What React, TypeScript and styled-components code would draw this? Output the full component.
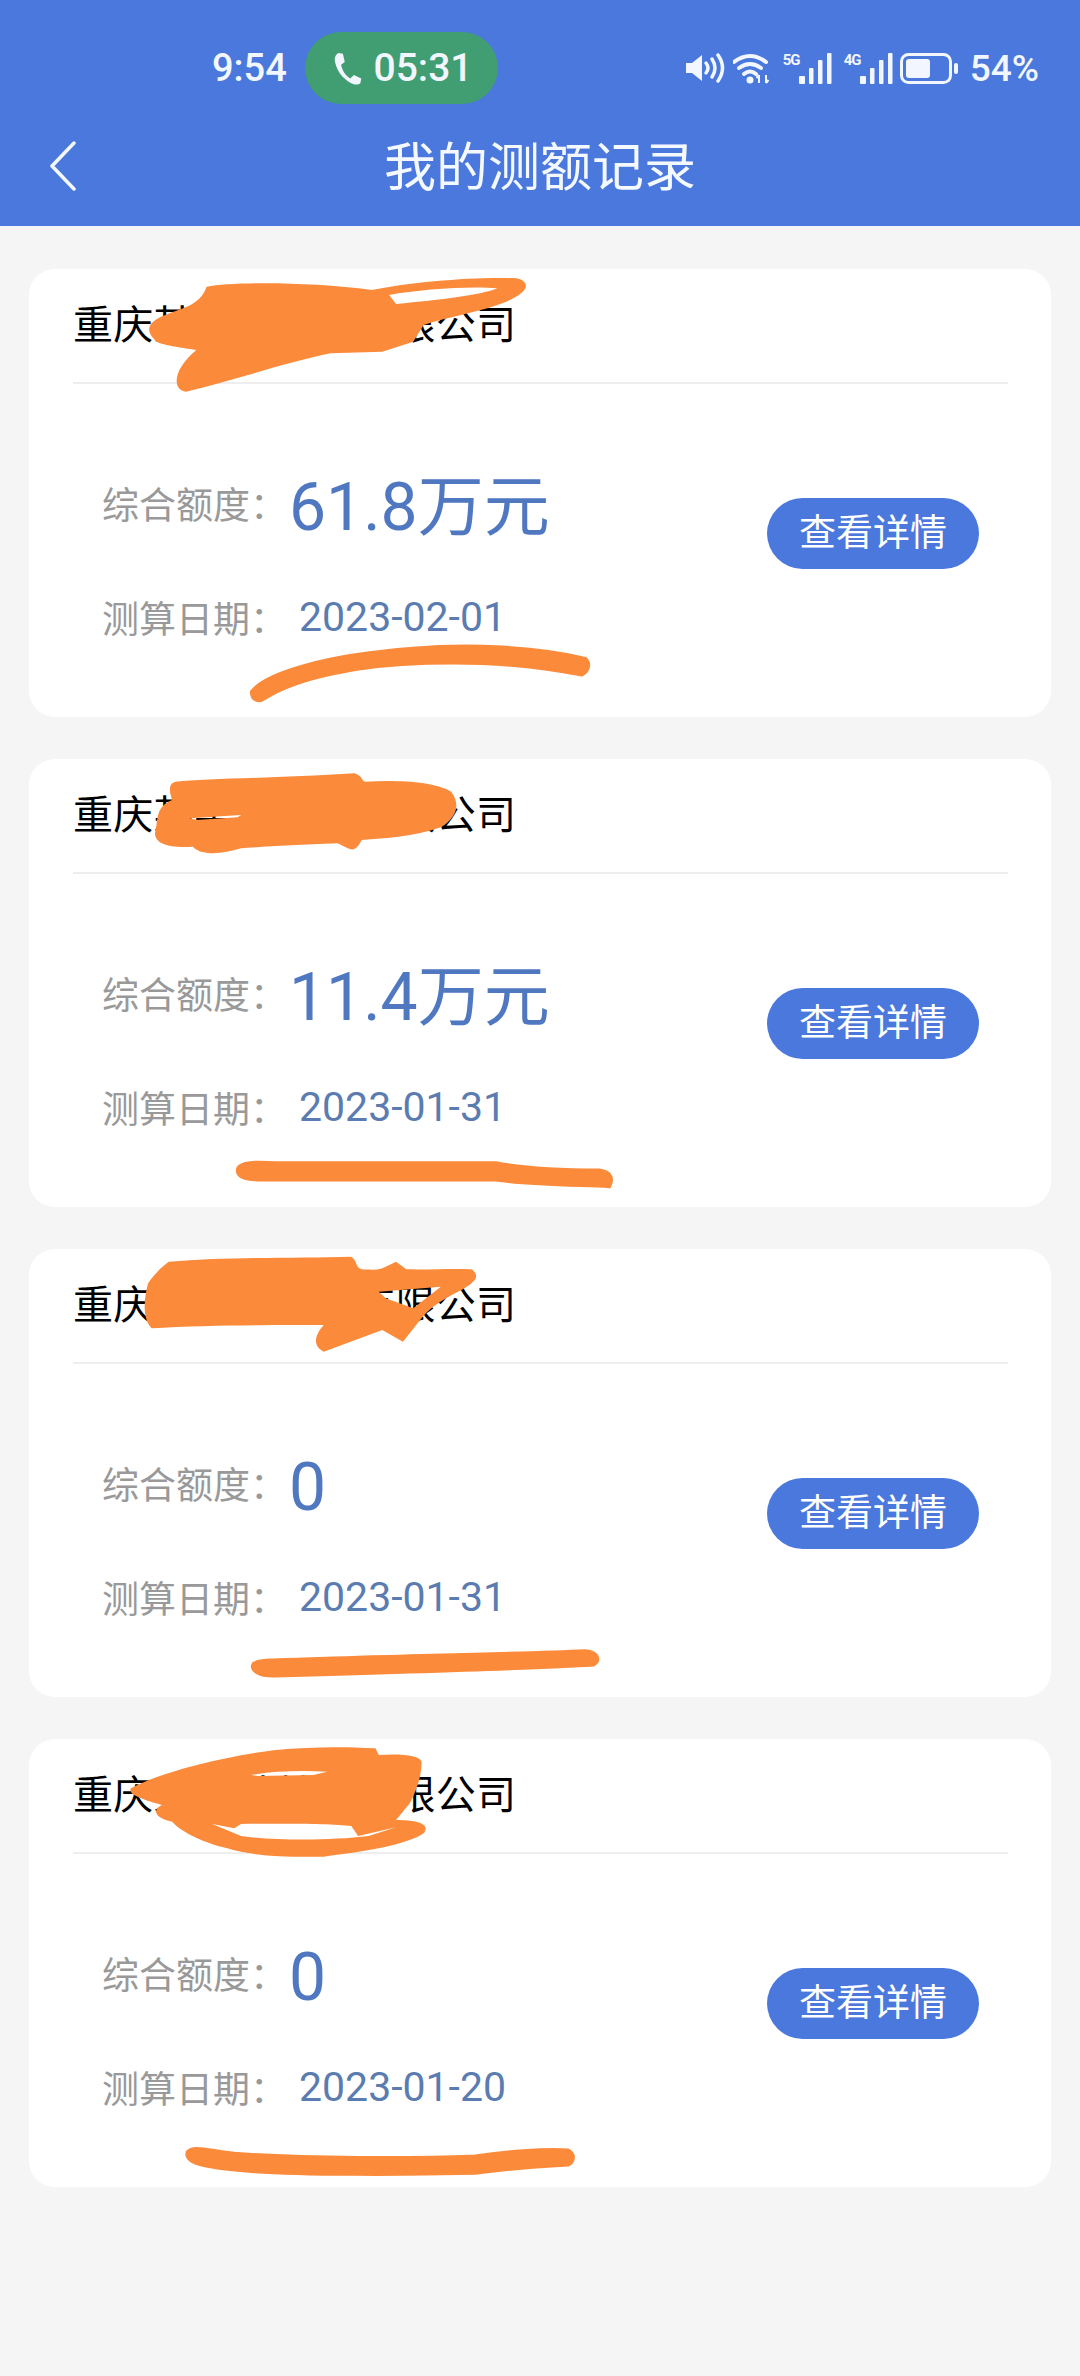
import React from "react";
import styled, { createGlobalStyle } from "styled-components";

const FONT = `Roboto, "Noto Sans CJK SC", sans-serif`;
const BLUE = "#4a78dc";
const SCRIBBLE = "#fb8a3a";

const records = [
  {
    amount: "61.8万元",
    date: "2023-02-01",
    scribble:
      "M300 110 C340 95 450 95 540 120 C600 95 690 80 750 85 C770 95 770 125 735 155 C700 185 650 200 615 225 L600 275 L555 305 L480 310 C420 335 340 390 270 425 C250 420 250 360 285 300 C250 290 225 280 225 270 C210 240 215 215 240 195 C260 175 290 170 300 110 Z M565 135 C610 118 680 108 722 115 C700 135 640 150 575 162 Z",
    underline:
      "M365 1325 C385 1270 470 1215 600 1195 C680 1180 780 1190 850 1225 C858 1240 855 1265 845 1275 C780 1250 720 1235 620 1240 C520 1245 430 1285 385 1345 C375 1360 365 1350 365 1325 Z",
  },
  {
    amount: "11.4万元",
    date: "2023-01-31",
    scribble:
      "M255 125 C300 115 400 115 515 100 C528 110 525 125 530 125 C580 120 630 125 655 155 C668 190 665 230 640 262 C600 290 560 295 525 300 C520 320 515 335 505 325 L490 310 C430 315 380 320 350 325 C320 345 290 345 280 320 C250 325 225 315 225 280 C230 240 225 200 250 180 C245 150 245 130 255 125 Z M275 235 L350 225 L345 232 L285 240 Z",
    underline:
      "M345 1285 C350 1265 370 1265 400 1268 L720 1268 C750 1280 800 1290 870 1290 C890 1295 890 1320 885 1340 C830 1335 770 1335 720 1320 L380 1320 C355 1320 342 1310 345 1285 Z",
  },
  {
    amount: "0",
    date: "2023-01-31",
    scribble:
      "M245 95 C330 80 430 85 510 80 C520 95 515 110 525 118 C545 120 550 120 560 110 L575 95 L590 118 C620 120 660 115 685 118 C695 135 695 150 670 180 C640 210 620 240 610 270 L585 335 L555 300 L470 365 C455 350 455 320 470 285 C400 285 300 285 220 295 C205 260 210 200 215 160 C225 130 235 110 245 95 Z M550 185 L640 170 L600 235 L560 205 Z",
    underline:
      "M368 1300 C380 1285 420 1290 520 1282 C640 1275 760 1270 850 1262 C870 1265 872 1295 862 1305 C780 1315 620 1325 400 1338 C375 1340 362 1320 368 1300 Z",
  },
  {
    amount: "0",
    date: "2023-01-20",
    scribble:
      "M190 205 C230 160 320 110 400 90 C450 80 500 80 545 85 L550 105 C580 100 610 105 612 125 C612 170 605 210 595 250 L575 300 C610 300 625 315 615 340 C590 375 530 395 470 410 C420 412 370 410 330 385 C290 365 260 330 250 305 C225 295 220 270 235 255 C210 240 185 225 190 205 Z M365 165 C400 152 440 152 475 155 L455 165 L375 168 Z M308 312 L340 325 L350 312 C400 310 480 310 510 318 L520 348 L575 322 L535 348 C480 362 400 362 350 348 Z",
    underline:
      "M272 1295 C280 1275 300 1290 340 1300 C440 1315 600 1315 690 1308 C730 1295 790 1285 825 1290 C835 1300 835 1325 825 1335 C780 1340 740 1345 690 1360 C580 1365 440 1365 370 1355 C310 1345 265 1335 272 1295 Z",
  },
];

function Signal({ tag }: { tag: string }) {
  return (
    <SignalWrap>
      <SignalTag>{tag}</SignalTag>
      <svg width="33" height="31" viewBox="0 0 33 31" fill="#f2f6ff">
        <rect x="0" y="23" width="6" height="8" rx="1" />
        <rect x="10" y="15" width="4.5" height="16" rx="1" />
        <rect x="19" y="7" width="4.5" height="24" rx="1" />
        <rect x="28" y="0" width="4.5" height="31" rx="1" />
      </svg>
    </SignalWrap>
  );
}

export default function App() {
  return (
    <>
      <GlobalStyle />
      <Page>
        <TopBar>
          <StatusBar>
            <Time>9:54</Time>
            <CallPill>
              <svg width="33" height="33" viewBox="0 0 36 36" fill="#f2f6ff">
                <path d="M8 1 L13 2 L15 11 L11 14 C12 20 16 26 21 29 L25 25 L33 29 L32 34 C30 36 26 36 22 34 C12 29 5 19 4 8 C4 5 6 2 8 1 Z" />
              </svg>
              <span>05:31</span>
            </CallPill>
            <StatusIcons>
              <svg width="40" height="30" viewBox="0 0 40 30" fill="none">
                <path d="M0 10 H6 L16 2 V28 L6 20 H0 Z" fill="#f2f6ff" />
                <path d="M20 10 Q24 15 20 20" stroke="#f2f6ff" strokeWidth="3.5" strokeLinecap="round" />
                <path d="M26 6 Q32 15 26 24" stroke="#f2f6ff" strokeWidth="3.5" strokeLinecap="round" />
                <path d="M32 2 Q41 15 32 28" stroke="#f2f6ff" strokeWidth="3.5" strokeLinecap="round" />
              </svg>
              <svg width="38" height="31" viewBox="0 0 38 31" fill="none">
                <path d="M1 9 Q17 -3 33 9" stroke="#f2f6ff" strokeWidth="4" strokeLinecap="round" />
                <path d="M6 15 Q17 7 28 15" stroke="#f2f6ff" strokeWidth="4" strokeLinecap="round" />
                <path d="M11 21 Q17 16 23 21" stroke="#f2f6ff" strokeWidth="4" strokeLinecap="round" />
                <circle cx="17" cy="27" r="3.5" fill="#f2f6ff" />
                <path d="M26 30 V22 M26 22 L23.5 25 M33 22 V30 M33 30 L35.5 27" stroke="#f2f6ff" strokeWidth="2" />
              </svg>
              <Signal tag="5G" />
              <Signal tag="4G" />
              <svg width="58" height="31" viewBox="0 0 58 31" fill="none">
                <rect x="1.5" y="1.5" width="49" height="28" rx="7" stroke="#f2f6ff" strokeWidth="3" />
                <rect x="6" y="6" width="24" height="19" rx="3" fill="#f2f6ff" />
                <rect x="54" y="10" width="4" height="11" rx="2" fill="#f2f6ff" />
              </svg>
              <Battery>54%</Battery>
            </StatusIcons>
          </StatusBar>
          <NavBar>
            <BackIcon width="28" height="50" viewBox="0 0 28 50" fill="none">
              <path d="M25 2 L3 25 L25 48" stroke="#f4f8ff" strokeWidth="3.5" strokeLinecap="round" strokeLinejoin="round" />
            </BackIcon>
            <Title>我的测额记录</Title>
          </NavBar>
        </TopBar>

        <List>
          {records.map((r, i) => (
            <Card key={i}>
              <CardHead>重庆某某某某某有限公司</CardHead>
              <CardBody>
                <Info>
                  <Row>
                    <Label>综合额度：</Label>
                    <Amount>{r.amount}</Amount>
                  </Row>
                  <DateRow>
                    <Label>测算日期：</Label>
                    <DateValue>{r.date}</DateValue>
                  </DateRow>
                </Info>
                <DetailButton>查看详情</DetailButton>
              </CardBody>
              {/* hand drawn marks on top of the screenshot */}
              <Marks viewBox="0 0 1568 1440" preserveAspectRatio="none">
                <ScribblePath d={r.scribble} fillRule="evenodd" />
                <UnderlinePath d={r.underline} />
              </Marks>
            </Card>
          ))}
        </List>
      </Page>
    </>
  );
}

const GlobalStyle = createGlobalStyle`
  html, body {
    margin: 0;
    padding: 0;
    background: #f5f5f5;
  }
`;

const Page = styled.div`
  width: 1080px;
  min-height: 2376px;
  background: #f5f5f5;
  font-family: ${FONT};
`;

const TopBar = styled.header`
  height: 226px;
  background: ${BLUE};
  color: #f2f6ff;
`;

const StatusBar = styled.div`
  height: 104px;
  box-sizing: border-box;
  padding: 32px 41px 0 212px;
  display: flex;
  align-items: center;
`;

const Time = styled.span`
  font-size: 38px;
  font-weight: 500;
  width: 93px;
`;

const CallPill = styled.div`
  width: 193px;
  height: 72px;
  border-radius: 36px;
  background: #419e72;
  display: flex;
  align-items: center;
  justify-content: center;
  gap: 10px;
  font-size: 39px;
  font-weight: 500;
`;

const StatusIcons = styled.div`
  margin-left: auto;
  display: flex;
  align-items: center;
  gap: 7px;
`;

const SignalWrap = styled.div`
  display: flex;
  align-items: flex-start;
  margin-left: 5px;
`;

const SignalTag = styled.span`
  font-size: 15px;
  line-height: 14px;
  font-weight: 700;
  width: 16px;
  letter-spacing: -1px;
`;

const Battery = styled.span`
  font-size: 37px;
  font-weight: 500;
  margin-left: 5px;
`;

const NavBar = styled.div`
  position: relative;
  height: 122px;
  display: flex;
  align-items: center;
  justify-content: center;
`;

const BackIcon = styled.svg`
  position: absolute;
  left: 49px;
  top: 37px;
`;

const Title = styled.h1`
  margin: 0 0 3px;
  font-size: 52px;
  font-weight: 400;
  color: #f4f8ff;
`;

const List = styled.main`
  padding: 43px 29px 0 29px;
  display: flex;
  flex-direction: column;
  gap: 42px;
`;

const Card = styled.section`
  position: relative;
  height: 448px;
  border-radius: 26px;
  background: #fff;
  display: flex;
  flex-direction: column;
`;

const CardHead = styled.div`
  height: 113px;
  margin: 0 43px 0 44px;
  border-bottom: 2px solid #eeeeee;
  display: flex;
  align-items: center;
  font-size: 40px;
  letter-spacing: 0.3px;
  line-height: 105px;
  color: #000;
`;

const CardBody = styled.div`
  flex: 1;
  padding: 0 72px 0 73px;
  display: flex;
  justify-content: space-between;
  align-items: flex-start;
`;

const Info = styled.div`
  padding-top: 84px;
  display: flex;
  flex-direction: column;
  gap: 54px;
`;

const Row = styled.div`
  height: 70px;
  display: flex;
  align-items: center;
`;

const DateRow = styled(Row)`
  height: 50px;
`;

const Label = styled.span`
  font-size: 37px;
  color: #999999;
  width: 187px;
  white-space: nowrap;
`;

const Amount = styled.span`
  font-size: 66px;
  line-height: 70px;
  margin-top: 9px;
  color: #4f78c0;
`;

const DateValue = styled.span`
  font-size: 41px;
  color: #5b7cb0;
  margin-left: 10px;
`;

const DetailButton = styled.button`
  margin-top: 114px;
  width: 212px;
  height: 71px;
  border: none;
  border-radius: 36px;
  background: ${BLUE};
  color: #fff;
  padding: 0 0 7px;
  font-family: ${FONT};
  font-size: 37px;
`;

const Marks = styled.svg`
  position: absolute;
  left: -29px;
  top: -19px;
  width: 1080px;
  height: 480px;
  pointer-events: none;
`;

const ScribblePath = styled.path`
  fill: ${SCRIBBLE};
`;

const UnderlinePath = styled.path`
  fill: ${SCRIBBLE};
  stroke: ${SCRIBBLE};
  stroke-width: 3px;
  vector-effect: non-scaling-stroke;
`;
